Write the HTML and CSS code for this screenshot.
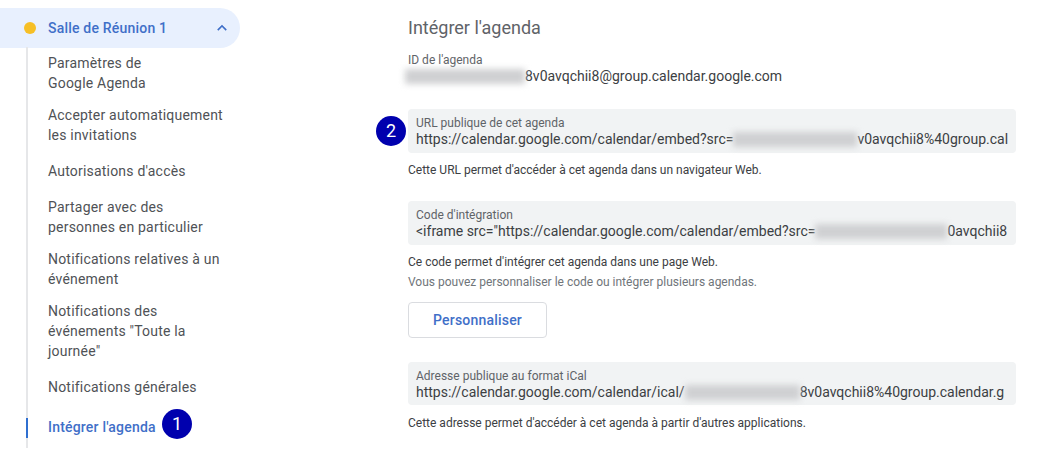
FILE: index.html
```html
<!DOCTYPE html>
<html lang="fr">
<head>
    <meta charset="UTF-8">
    <title>Intégrer l'agenda</title>
    <link rel="stylesheet" href="styles.css">
</head>
<body>
    <div class="page">
        <nav class="sidebar">
            <div class="calendar-row">
                <span class="dot"></span>
                <span class="calendar-name">Salle de Réunion 1</span>
                <svg class="chevron" width="24" height="24" viewBox="0 0 24 24"><path d="M7.4 15.4 12 10.8l4.6 4.6L18 14l-6-6-6 6z" fill="#3f6fc8"/></svg>
            </div>
            <ul class="menu">
                <li>Paramètres de<br>Google Agenda</li>
                <li>Accepter automatiquement<br>les invitations</li>
                <li class="single">Autorisations d'accès</li>
                <li>Partager avec des<br>personnes en particulier</li>
                <li>Notifications relatives à un<br>événement</li>
                <li>Notifications des<br>événements "Toute la<br>journée"</li>
                <li class="single">Notifications générales</li>
                <li class="single active">Intégrer l'agenda <span class="badge badge-one">1</span></li>
            </ul>
        </nav>

        <main class="content">
            <h1>Intégrer l'agenda</h1>

            <div class="agenda-id">
                <div class="field-label">ID de l'agenda</div>
                <div class="field-value"><span class="blur blur-id"></span>8v0avqchii8@group.calendar.google.com</div>
            </div>

            <div class="field field-public">
                <span class="badge badge-two">2</span>
                <div class="field-label">URL publique de cet agenda</div>
                <div class="field-value">https://calendar.google.com/calendar/embed?src=<span class="blur blur-url"></span>v0avqchii8%40group.cal</div>
            </div>
            <p class="help">Cette URL permet d'accéder à cet agenda dans un navigateur Web.</p>

            <div class="field field-code">
                <div class="field-label">Code d'intégration</div>
                <div class="field-value">&lt;iframe src="https://calendar.google.com/calendar/embed?src=<span class="blur blur-code"></span>0avqchii8</div>
            </div>
            <p class="help">Ce code permet d'intégrer cet agenda dans une page Web.</p>
            <p class="help help-muted">Vous pouvez personnaliser le code ou intégrer plusieurs agendas.</p>
            <button class="customize-btn">Personnaliser</button>

            <div class="field field-ical">
                <div class="field-label">Adresse publique au format iCal</div>
                <div class="field-value">https://calendar.google.com/calendar/ical/<span class="blur blur-ical"></span>8v0avqchii8%40group.calendar.g</div>
            </div>
            <p class="help help-ical">Cette adresse permet d'accéder à cet agenda à partir d'autres applications.</p>
        </main>
    </div>
</body>
</html>
```

FILE: styles.css
```css
html, body {
    margin: 0;
    padding: 0;
    height: 449px;
    overflow: hidden;
    background: #fff;
}
body {
    font-family: Roboto, 'Liberation Sans', sans-serif;
    color: #3c4043;
}
.page {
    display: flex;
    height: 449px;
}
.sidebar {
    width: 240px;
    flex-shrink: 0;
    padding-top: 8px;
}
.calendar-row {
    display: flex;
    align-items: center;
    height: 40px;
    background: #e8f0fe;
    border-radius: 0 20px 20px 0;
    padding-left: 24px;
    padding-right: 6px;
}
.dot {
    width: 12px;
    height: 12px;
    border-radius: 50%;
    background: #f6bf26;
    margin-right: 12px;
}
.calendar-name {
    flex: 1;
    font-size: 14px;
    font-weight: 500;
    letter-spacing: 0.2px;
    color: #3f6fc8;
}
.chevron {
    display: block;
    transform: scale(0.8);
}
.menu {
    list-style: none;
    margin: 0 0 0 26px;
    padding: 0;
    height: 401px;
    border-left: 2px solid #e6e7e9;
    box-sizing: border-box;
}
.menu li {
    position: relative;
    padding: 6px 0 6px 20px;
    font-size: 14px;
    line-height: 20px;
    letter-spacing: 0.2px;
    color: #4f5256;
}
.menu li.single {
    padding: 10px 0 10px 20px;
}
.menu li:first-child {
    margin-top: -1px;
}
.menu li.active {
    color: #3f6fc8;
    font-weight: 500;
}
.menu li.active::before {
    content: '';
    position: absolute;
    left: -2px;
    top: 11px;
    width: 2px;
    height: 20px;
    background: #2f6fd0;
}
.badge {
    position: absolute;
    width: 30px;
    height: 30px;
    border-radius: 50%;
    background: #0000ae;
    color: #fff;
    font-size: 18px;
    font-weight: 400;
    line-height: 30px;
    text-align: center;
    letter-spacing: 0;
}
.badge-one {
    left: 134px;
    top: 2px;
}
.badge-two {
    left: -32px;
    top: 7px;
}
.content {
    flex: 1;
    margin-left: 168px;
    margin-right: 21px;
    min-width: 0;
}
h1 {
    margin: 0;
    padding-top: 17px;
    font-size: 18px;
    font-weight: 400;
    line-height: 22px;
    color: #5f6368;
}
.agenda-id {
    margin-top: 14px;
}
.field-label {
    font-size: 12px;
    line-height: 15px;
    color: #5f6368;
}
.field-value {
    font-size: 14px;
    line-height: 17px;
    color: #3c4043;
    white-space: nowrap;
}
.blur {
    display: inline-block;
    height: 15px;
    vertical-align: -3px;
    background: #cfd0d2;
    filter: blur(3px);
}
.blur-id {
    width: 120px;
}
.blur-url {
    width: 124px;
}
.blur-code {
    width: 132px;
}
.blur-ical {
    width: 115px;
}
.agenda-id .field-value {
    margin-left: -3px;
}
.field {
    position: relative;
    box-sizing: border-box;
    height: 44px;
    padding: 7px 8px 0;
    background: #f1f3f4;
    border-radius: 4px;
}
.field-public {
    margin-top: 24px;
}
.field-code {
    margin-top: 23px;
}
.field-ical {
    margin-top: 24px;
    height: 43px;
}
.help {
    margin: 9px 0 0;
    font-size: 12px;
    line-height: 16px;
    color: #3c4043;
}
.help-muted {
    margin-top: 4px;
    color: #70757a;
}
.help-ical {
    margin-top: 10px;
}
.customize-btn {
    display: block;
    width: 139px;
    height: 36px;
    margin-top: 12px;
    background: #fff;
    border: 1px solid #dadce0;
    border-radius: 4px;
    font-family: Roboto, 'Liberation Sans', sans-serif;
    font-size: 14px;
    font-weight: 500;
    letter-spacing: 0.2px;
    color: #3f6fc8;
}
```
